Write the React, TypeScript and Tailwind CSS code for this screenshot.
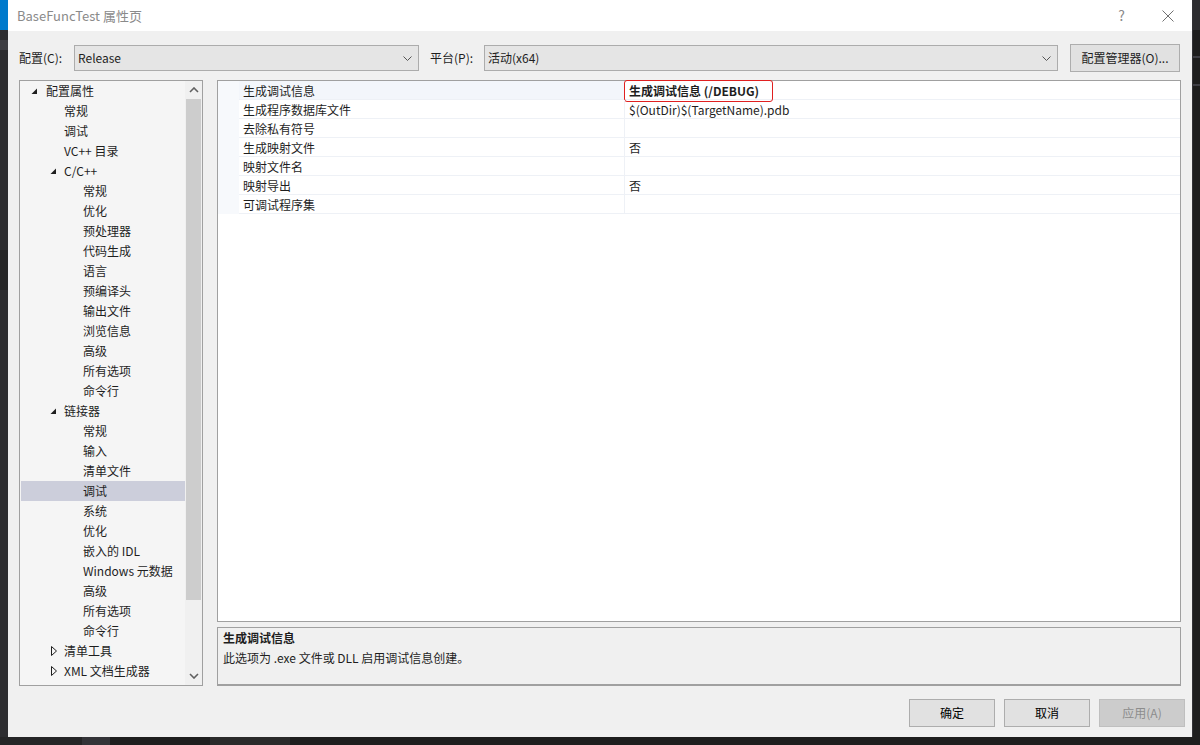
import React from "react";

type Node = { label: string; level: number; arrow?: "open" | "closed"; selected?: boolean };

const tree: Node[] = [
  { label: "配置属性", level: 0, arrow: "open" },
  { label: "常规", level: 1 },
  { label: "调试", level: 1 },
  { label: "VC++ 目录", level: 1 },
  { label: "C/C++", level: 1, arrow: "open" },
  { label: "常规", level: 2 },
  { label: "优化", level: 2 },
  { label: "预处理器", level: 2 },
  { label: "代码生成", level: 2 },
  { label: "语言", level: 2 },
  { label: "预编译头", level: 2 },
  { label: "输出文件", level: 2 },
  { label: "浏览信息", level: 2 },
  { label: "高级", level: 2 },
  { label: "所有选项", level: 2 },
  { label: "命令行", level: 2 },
  { label: "链接器", level: 1, arrow: "open" },
  { label: "常规", level: 2 },
  { label: "输入", level: 2 },
  { label: "清单文件", level: 2 },
  { label: "调试", level: 2, selected: true },
  { label: "系统", level: 2 },
  { label: "优化", level: 2 },
  { label: "嵌入的 IDL", level: 2 },
  { label: "Windows 元数据", level: 2 },
  { label: "高级", level: 2 },
  { label: "所有选项", level: 2 },
  { label: "命令行", level: 2 },
  { label: "清单工具", level: 1, arrow: "closed" },
  { label: "XML 文档生成器", level: 1, arrow: "closed" },
];

const props = [
  { name: "生成调试信息", value: "生成调试信息 (/DEBUG)" },
  { name: "生成程序数据库文件", value: "$(OutDir)$(TargetName).pdb" },
  { name: "去除私有符号", value: "" },
  { name: "生成映射文件", value: "否" },
  { name: "映射文件名", value: "" },
  { name: "映射导出", value: "否" },
  { name: "可调试程序集", value: "" },
];

function Chevron({ up }: { up?: boolean }) {
  return (
    <svg width="10" height="6" viewBox="0 0 10 6">
      <polyline
        points={up ? "1,5 5,1 9,5" : "1,1 5,5 9,1"}
        fill="none"
        stroke="#606060"
        strokeWidth="1.6"
      />
    </svg>
  );
}

function Select({ value, width }: { value: string; width: string }) {
  return (
    <div className={`${width} h-[26px] flex items-center justify-between bg-[#e5e5e5] border border-[#acacac] pl-[3px] pr-[6px]`}>
      <span>{value}</span>
      <svg width="9" height="5" viewBox="0 0 9 5">
        <polyline points="0.5,0.5 4.5,4.5 8.5,0.5" fill="none" stroke="#555" strokeWidth="1" />
      </svg>
    </div>
  );
}

function Arrow({ kind }: { kind: "open" | "closed" }) {
  if (kind === "open") {
    return (
      <svg width="7" height="7" viewBox="0 0 7 7">
        <polygon points="6,0.5 6,6 0.5,6" fill="#1e1e1e" />
      </svg>
    );
  }
  return (
    <svg width="6" height="10" viewBox="0 0 6 10">
      <polygon points="0.5,0.5 5.5,5 0.5,9.5" fill="none" stroke="#1e1e1e" strokeWidth="1" />
    </svg>
  );
}

function Button({ label, disabled }: { label: string; disabled?: boolean }) {
  return (
    <div
      className={
        disabled
          ? "w-[86px] h-[28px] flex items-center justify-center bg-[#cccccc] border border-[#bfbfbf] text-[#8c8c8c]"
          : "w-[86px] h-[28px] flex items-center justify-center bg-[#e1e1e1] border border-[#adadad] text-black"
      }
    >
      {label}
    </div>
  );
}

export default function App() {
  return (
    <div className="w-[1200px] h-[745px] flex flex-col bg-[#1e1e1e] overflow-hidden font-['Segoe_UI','Noto_Sans_CJK_SC',sans-serif] text-[12px] text-[#1e1e1e]">
      <div className="flex h-[737px]">
        {/* left edge of the editor behind */}
        <div className="w-[8px] flex flex-col bg-[#2d2d30]">
          <div className="h-[30px] bg-[#007acc]" />
          <div className="h-[10px]" />
          <div className="h-[10px] bg-[#3e3e42]" />
          <div className="h-[200px]" />
          <div className="h-[40px] bg-[#252526]" />
        </div>

        {/* dialog */}
        <div className="w-[1184px] flex flex-col bg-[#f0f0f0]">
          <div className="h-[31px] bg-white flex items-center pl-[9px]">
            <span className="text-[13px] text-[#8a8a8a] flex-1">BaseFuncTest 属性页</span>
            <span className="text-[14px] text-[#8a8a8a] mr-[37px]">?</span>
            <svg width="12" height="12" viewBox="0 0 12 12" className="mr-[18px]">
              <path d="M0.5 0.5 L11.5 11.5 M11.5 0.5 L0.5 11.5" stroke="#707070" strokeWidth="1" />
            </svg>
          </div>

          <div className="flex-1 flex flex-col pl-[11px] pr-[11px] pt-[13px]">
            <div className="h-[28px] flex items-center">
              <span className="w-[55px]">配置(C):</span>
              <Select value="Release" width="w-[345px]" />
              <span className="ml-[11px] w-[54px]">平台(P):</span>
              <Select value="活动(x64)" width="w-[574px]" />
              <div className="ml-[12px] w-[110px] h-[28px] flex items-center justify-center bg-[#e1e1e1] border border-[#adadad]">
                配置管理器(O)...
              </div>
            </div>

            <div className="mt-[8px] h-[606px] flex gap-[14px]">
              {/* tree */}
              <div className="w-[184px] h-full flex border border-[#a0a0a0] bg-[#f5f5f5]">
                <div className="flex-1 flex flex-col pl-px">
                  {tree.map((n, i) => (
                    <div
                      key={i}
                      className={`h-[20px] flex items-center ${n.selected ? "bg-[#cccedb]" : ""}`}
                    >
                      <div
                        className={
                          n.level === 0 ? "w-[25px] flex justify-end pr-[8px]" : n.level === 1 ? "w-[43px] flex justify-end pr-[7px]" : "w-[62px]"
                        }
                      >
                        {n.arrow && <Arrow kind={n.arrow} />}
                      </div>
                      <span className="whitespace-nowrap">{n.label}</span>
                    </div>
                  ))}
                </div>
                <div className="w-[17px] flex flex-col items-center bg-[#f0f0f0]">
                  <div className="h-[18px] flex items-center justify-center">
                    <Chevron up />
                  </div>
                  <div className="w-[15px] h-[501px] bg-[#cdcdcd]" />
                  <div className="flex-1" />
                  <div className="h-[18px] flex items-center justify-center">
                    <Chevron />
                  </div>
                </div>
              </div>

              {/* property grid + description */}
              <div className="flex-1 flex flex-col gap-[5px]">
                <div className="h-[542px] border border-[#a0a0a0] bg-white flex flex-col">
                  {props.map((p, i) => (
                    <div key={i} className="h-[19px] flex">
                      <div className="w-[21px] bg-[#f7f9fc]" />
                      <div
                        className={`w-[386px] flex items-center pl-[4px] pt-px border-b border-r border-[#eef1f6] ${i === 0 ? "bg-[#f3f6fb]" : ""}`}
                      >
                        {p.name}
                      </div>
                      <div className="flex-1 flex items-center pl-[4px] pt-px border-b border-[#eef1f6]">
                        {i === 0 ? (
                          <span className="-ml-[5px] w-[149px] h-[22px] flex items-center px-[4px] border border-[#e02020] rounded-[3px] font-bold">
                            {p.value}
                          </span>
                        ) : (
                          p.value
                        )}
                      </div>
                    </div>
                  ))}
                </div>
                <div className="h-[59px] border border-[#a0a0a0] border-b-2 bg-[#f0f0f0] px-[5px] flex flex-col">
                  <span className="h-[19px] flex items-center font-bold">生成调试信息</span>
                  <span className="h-[21px] flex items-center">此选项为 .exe 文件或 DLL 启用调试信息创建。</span>
                </div>
              </div>
            </div>

            <div className="mt-[13px] flex justify-end gap-[9px] -mr-[4px]">
              <Button label="确定" />
              <Button label="取消" />
              <Button label="应用(A)" disabled />
            </div>
          </div>
        </div>

        {/* right edge of the editor behind */}
        <div className="w-[8px] flex flex-col bg-[#1e1e1e] border-l border-[#333337]">
          <div className="h-[30px] bg-[#2d2d30]" />
          <div className="h-[26px]" />
          <div className="h-[2px] bg-[#3f3f46]" />
          <div className="h-[26px]" />
          <div className="h-[2px] bg-[#3f3f46]" />
        </div>
      </div>
      <div className="h-[8px] flex bg-[#1e1e1e]">
        <div className="w-[82px] bg-[#252526]" />
        <div className="w-[28px] bg-[#333337]" />
        <div className="w-[100px]" />
        <div className="w-[80px] bg-[#2a2a2a]" />
      </div>
    </div>
  );
}
